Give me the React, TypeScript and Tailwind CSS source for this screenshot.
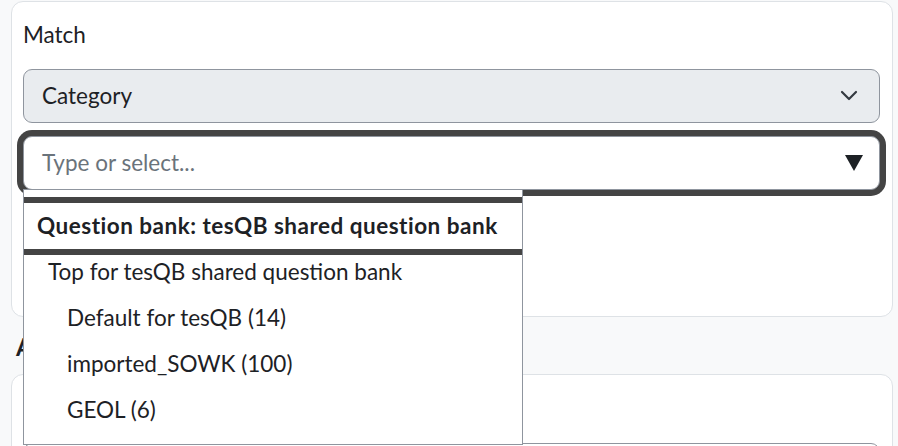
const categories = [
  { label: "Top for tesQB shared question bank", indent: "pl-[24px]" },
  { label: "Default for tesQB (14)", indent: "pl-[43px]" },
  { label: "imported_SOWK (100)", indent: "pl-[43px]" },
  { label: "GEOL (6)", indent: "pl-[43px]" },
];

function Chevron() {
  return (
    <svg width="18" height="12" viewBox="0 0 18 12" className="text-[#343a40]">
      <polyline points="2,2 9,9 16,2" fill="none" stroke="currentColor" strokeWidth="2.2" strokeLinecap="round" strokeLinejoin="round" />
    </svg>
  );
}

function Caret() {
  return (
    <svg width="18" height="16" viewBox="0 0 18 16">
      <polygon points="0,0 18,0 9,16" fill="#1d2125" />
    </svg>
  );
}

export default function App() {
  return (
    <div
      className="relative h-[446px] w-[898px] overflow-hidden bg-[#f8f9fa] pt-[1px] pl-[11px] text-[22.5px] text-[#1d2125]"
      style={{ fontFamily: 'Lato, "Noto Sans", sans-serif' }}
    >
      <div className="relative z-10 h-[316px] w-[882px] rounded-[12px] border border-[#dee2e6] bg-white px-[11px] pt-[16px]">
        <div className="h-[34px] leading-[34px]">Match</div>

        <div className="mt-[17px] flex h-[54px] w-[857px] items-center justify-between rounded-[9px] border border-[#8f959e] bg-[#e9ecef] pr-[21px] pl-[18px]">
          <span>Category</span>
          <Chevron />
        </div>

        <div className="relative mt-[13px] w-[857px]">
          <div className="flex h-[54px] items-center justify-between rounded-[9px] border border-[#8f959e] bg-white pr-[16px] pl-[18px] shadow-[0_0_0_6px_#444]">
            <span className="text-[#6a737b]">Type or select...</span>
            <Caret />
          </div>

          <div className="absolute top-[53px] left-0 h-[256px] w-[500px] overflow-hidden border border-[#8f959e] bg-white pt-[13px]">
            <div className="flex h-[46px] items-center pl-[13px] font-bold tracking-[0.5px] shadow-[0_0_0_6px_#444]">
              Question bank: tesQB shared question bank
            </div>
            {categories.map((c) => (
              <div key={c.label} className={`flex h-[46px] items-center ${c.indent}`}>
                {c.label}
              </div>
            ))}
          </div>
        </div>
      </div>

      <div className="flex h-[57px] items-center pl-[5px] pt-[2px] text-[24px] font-bold">Add</div>

      <div className="h-[100px] w-[882px] rounded-[12px] border border-[#dee2e6] bg-white px-[11px] pt-[68px]">
        <div className="h-[54px] w-[857px] rounded-[9px] border border-[#8f959e] bg-white" />
      </div>
    </div>
  );
}
